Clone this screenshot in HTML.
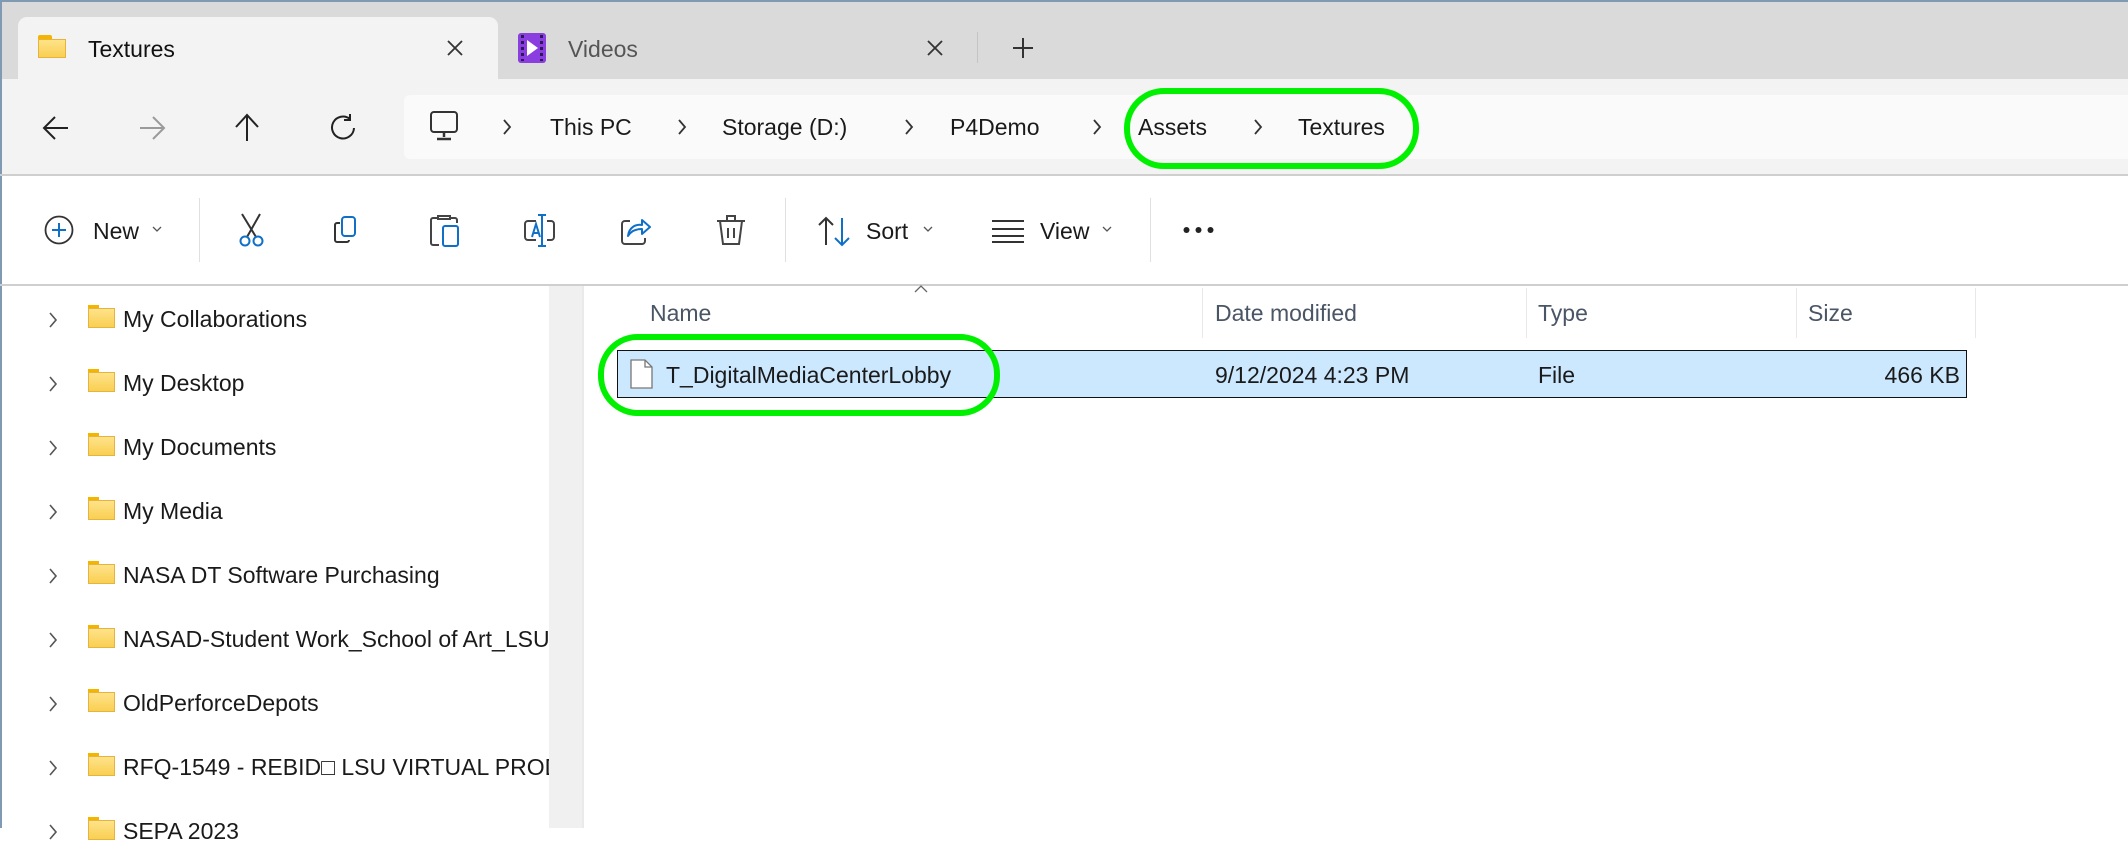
<!DOCTYPE html>
<html><head><meta charset="utf-8"><style>
*{margin:0;padding:0;box-sizing:border-box}
body{width:2128px;height:828px;overflow:hidden;background:#fff;font-family:"Liberation Sans",sans-serif;color:#1a1a1a;position:relative}
.a{position:absolute}
.t{position:absolute;font-size:23px;white-space:nowrap;line-height:1}
svg{position:absolute;overflow:visible}
</style></head><body>
<div class="a" style="left:0;top:0;width:2128px;height:79px;background:#dadada"></div>
<div class="a" style="left:0;top:0;width:2128px;height:2px;background:#7f9ab2"></div>
<div class="a" style="left:0;top:0;width:2px;height:828px;background:#7f9ab2"></div>
<div class="a" style="left:18px;top:17px;width:480px;height:64px;background:#f3f3f3;border-radius:9px 9px 0 0"></div>
<div class="a" style="left:38px;top:35px;width:14px;height:6px;background:#f4b400;border-radius:2px 2px 0 0"></div>
<div class="a" style="left:38px;top:39px;width:28px;height:19px;background:linear-gradient(#ffe38a,#f9cf52);border:1px solid #e6b43a"></div>
<div class="t" style="left:88px;top:38px;color:#111">Textures</div>
<svg style="left:447px;top:40px" width="16" height="16"><path d="M1 1L15 15M15 1L1 15" stroke="#333" stroke-width="1.8"/></svg>
<div class="a" style="left:518px;top:33px;width:28px;height:30px;background:#8a3ee0;border-radius:3px"></div>
<div class="a" style="left:521px;top:35px;width:3px;height:26px;background:repeating-linear-gradient(#2b1a55 0 3px,#8a3ee0 3px 6px)"></div>
<div class="a" style="left:540px;top:35px;width:3px;height:26px;background:repeating-linear-gradient(#2b1a55 0 3px,#8a3ee0 3px 6px)"></div>
<svg style="left:526px;top:40px" width="14" height="16"><path d="M1 0 L12 8 L1 16Z" fill="#fff"/></svg>
<div class="t" style="left:568px;top:38px;color:#555">Videos</div>
<svg style="left:927px;top:40px" width="16" height="16"><path d="M1 1L15 15M15 1L1 15" stroke="#333" stroke-width="1.8"/></svg>
<div class="a" style="left:977px;top:32px;width:1px;height:31px;background:#c4c4c4"></div>
<svg style="left:1013px;top:38px" width="20" height="20"><path d="M10 0V20M0 10H20" stroke="#333" stroke-width="2"/></svg>
<div class="a" style="left:2px;top:79px;width:2126px;height:95px;background:#f3f3f3"></div>
<div class="a" style="left:0;top:174px;width:2128px;height:2px;background:#cfcfcf"></div>
<svg style="left:43px;top:115px" width="26" height="26"><path d="M25 13H2M12 2L1 13L12 24" stroke="#222" stroke-width="2" fill="none"/></svg>
<svg style="left:139px;top:115px" width="26" height="26"><path d="M1 13H24M14 2L25 13L14 24" stroke="#9a9a9a" stroke-width="2" fill="none"/></svg>
<svg style="left:234px;top:114px" width="26" height="28"><path d="M13 27V2M2 13L13 1L24 13" stroke="#222" stroke-width="2" fill="none"/></svg>
<svg style="left:331px;top:114px" width="26" height="28"><path d="M19 5A11 11 0 1 0 23 14M19 0V6H13" stroke="#222" stroke-width="2" fill="none"/></svg>
<div class="a" style="left:404px;top:95px;width:1724px;height:64px;background:#fafafa;border-radius:6px 0 0 6px"></div>
<svg style="left:430px;top:111px" width="30" height="32"><rect x="1" y="1" width="26" height="20" rx="3" stroke="#333" stroke-width="2" fill="none"/><path d="M14 21V26M7 28H21" stroke="#333" stroke-width="2.5"/></svg>
<svg style="left:502px;top:119px" width="10" height="16"><path d="M2 1L8 8L2 15" stroke="#333" stroke-width="1.8" fill="none"/></svg>
<div class="t" style="left:550px;top:116px">This PC</div>
<svg style="left:677px;top:119px" width="10" height="16"><path d="M2 1L8 8L2 15" stroke="#333" stroke-width="1.8" fill="none"/></svg>
<div class="t" style="left:722px;top:116px">Storage (D:)</div>
<svg style="left:904px;top:119px" width="10" height="16"><path d="M2 1L8 8L2 15" stroke="#333" stroke-width="1.8" fill="none"/></svg>
<div class="t" style="left:950px;top:116px">P4Demo</div>
<svg style="left:1092px;top:119px" width="10" height="16"><path d="M2 1L8 8L2 15" stroke="#333" stroke-width="1.8" fill="none"/></svg>
<div class="t" style="left:1138px;top:116px">Assets</div>
<svg style="left:1253px;top:119px" width="10" height="16"><path d="M2 1L8 8L2 15" stroke="#333" stroke-width="1.8" fill="none"/></svg>
<div class="t" style="left:1298px;top:116px">Textures</div>
<div class="a" style="left:1124px;top:88px;width:295px;height:81px;border:6px solid #00f000;border-radius:40px"></div>
<svg style="left:44px;top:215px" width="30" height="30"><circle cx="15" cy="15" r="13.5" stroke="#333" stroke-width="1.8" fill="none"/><path d="M15 8V22M8 15H22" stroke="#1070c8" stroke-width="2"/></svg>
<div class="t" style="left:93px;top:220px">New</div>
<svg style="left:152px;top:226px" width="10" height="6"><path d="M1 1L5 5L9 1" stroke="#555" stroke-width="1.3" fill="none"/></svg>
<div class="a" style="left:199px;top:198px;width:1px;height:64px;background:#e0e0e0"></div>
<svg style="left:238px;top:213px" width="28" height="34"><path d="M4 1L18 24M22 1L9 24" stroke="#333" stroke-width="2"/><circle cx="7" cy="28" r="4.5" stroke="#1070c8" stroke-width="2" fill="none"/><circle cx="20" cy="28" r="4.5" stroke="#1070c8" stroke-width="2" fill="none"/></svg>
<svg style="left:333px;top:215px" width="30" height="30"><path d="M7 8H4A2 2 0 0 0 2 10V25A2 2 0 0 0 4 27H14A2 2 0 0 0 16 25" stroke="#333" stroke-width="2" fill="none"/><rect x="9" y="2" width="13" height="19" rx="3" stroke="#1070c8" stroke-width="2" fill="none"/></svg>
<svg style="left:429px;top:213px" width="32" height="34"><path d="M8 5H4A2 2 0 0 0 2 7V30A2 2 0 0 0 4 32H10M22 5H26A2 2 0 0 1 28 7V10M9 6V3H21V6Z" stroke="#444" stroke-width="2" fill="none"/><rect x="14" y="13" width="15" height="20" rx="2" stroke="#1070c8" stroke-width="2" fill="none"/></svg>
<svg style="left:523px;top:213px" width="38" height="34"><path d="M13 8H5A3 3 0 0 0 2 11V24A3 3 0 0 0 5 27H13M24 8H28A3 3 0 0 1 31 11V24A3 3 0 0 1 28 27H24" stroke="#444" stroke-width="2" fill="none"/><path d="M19 2V33M15 2H23M15 33H23M9 24L13 11L17 24M10.5 20H15.5" stroke="#1070c8" stroke-width="2" fill="none"/></svg>
<svg style="left:620px;top:213px" width="34" height="34"><path d="M10 8H5A3 3 0 0 0 2 11V28A3 3 0 0 0 5 31H22A3 3 0 0 0 25 28V25" stroke="#444" stroke-width="2" fill="none"/><path d="M8 23C9 14 16 11 22 12V7L30 14L22 21V16C16 16 11 18 8 23Z" stroke="#1070c8" stroke-width="2" fill="none" stroke-linejoin="round"/></svg>
<svg style="left:716px;top:213px" width="30" height="34"><path d="M1 8H29M11 8V3H19V8M4 8L7 31H23L26 8M12 15V25M18 15V25" stroke="#444" stroke-width="2" fill="none"/></svg>
<div class="a" style="left:785px;top:198px;width:1px;height:64px;background:#e0e0e0"></div>
<svg style="left:818px;top:216px" width="34" height="30"><path d="M8 29V2M1 9L8 2L15 9" stroke="#333" stroke-width="2" fill="none"/><path d="M24 2V29M17 22L24 29L31 22" stroke="#1070c8" stroke-width="2" fill="none"/></svg>
<div class="t" style="left:866px;top:220px">Sort</div>
<svg style="left:923px;top:226px" width="10" height="6"><path d="M1 1L5 5L9 1" stroke="#555" stroke-width="1.3" fill="none"/></svg>
<svg style="left:992px;top:219px" width="32" height="24"><path d="M0 2H32M0 10H32M0 17H32M0 23H32" stroke="#333" stroke-width="2"/></svg>
<div class="t" style="left:1040px;top:220px">View</div>
<svg style="left:1102px;top:226px" width="10" height="6"><path d="M1 1L5 5L9 1" stroke="#555" stroke-width="1.3" fill="none"/></svg>
<div class="a" style="left:1150px;top:198px;width:1px;height:64px;background:#e0e0e0"></div>
<svg style="left:1183px;top:226px" width="32" height="8"><circle cx="3.5" cy="4" r="3" fill="#222"/><circle cx="15.5" cy="4" r="3" fill="#222"/><circle cx="27.5" cy="4" r="3" fill="#222"/></svg>
<div class="a" style="left:0;top:284px;width:2128px;height:2px;background:#cfcfcf"></div>
<div class="a" style="left:549px;top:286px;width:33px;height:542px;background:#f0f0f0"></div>
<div class="a" style="left:582px;top:286px;width:2px;height:542px;background:#eaeaea"></div>
<div id="nav"></div>
<svg style="left:914px;top:285px" width="14" height="8"><path d="M1 7L7 1L13 7" stroke="#666" stroke-width="1.3" fill="none"/></svg>
<div class="t" style="left:650px;top:302px;color:#4a5565">Name</div>
<div class="a" style="left:1202px;top:288px;width:1px;height:50px;background:#e8e8e8"></div>
<div class="t" style="left:1215px;top:302px;color:#4a5565">Date modified</div>
<div class="a" style="left:1526px;top:288px;width:1px;height:50px;background:#e8e8e8"></div>
<div class="t" style="left:1538px;top:302px;color:#4a5565">Type</div>
<div class="a" style="left:1796px;top:288px;width:1px;height:50px;background:#e8e8e8"></div>
<div class="t" style="left:1808px;top:302px;color:#4a5565">Size</div>
<div class="a" style="left:1975px;top:288px;width:1px;height:50px;background:#e8e8e8"></div>
<div class="a" style="left:617px;top:350px;width:1350px;height:48px;background:#cce8ff;border:1.5px solid #111"></div>
<svg style="left:630px;top:359px" width="24" height="30"><path d="M1 1H15L22 8V29H1Z" fill="#fff" stroke="#777" stroke-width="1.3"/><path d="M15 1V8H22" fill="none" stroke="#777" stroke-width="1.3"/></svg>
<div class="t" style="left:666px;top:364px">T_DigitalMediaCenterLobby</div>
<div class="t" style="left:1215px;top:364px">9/12/2024 4:23 PM</div>
<div class="t" style="left:1538px;top:364px">File</div>
<div class="t" style="left:1960px;top:364px;transform:translateX(-100%)">466 KB</div>
<div class="a" style="left:598px;top:334px;width:402px;height:82px;border:6px solid #00f000;border-radius:40px"></div>
<script>
var n=["My Collaborations","My Desktop","My Documents","My Media","NASA DT Software Purchasing","NASAD-Student Work_School of Art_LSU","OldPerforceDepots","RFQ-1549 - REBID\u25A1 LSU VIRTUAL PRODUCTION","SEPA 2023"],h="";
n.forEach(function(s,i){var y=320+i*64;
h+='<svg style="left:48px;top:'+(y-8)+'px" width="10" height="16"><path d="M2 1L8 8L2 15" stroke="#555" stroke-width="1.6" fill="none"/></svg>';
h+='<div class="a" style="left:88px;top:'+(y-15)+'px;width:11px;height:5px;background:#f4b400"></div>';
h+='<div class="a" style="left:88px;top:'+(y-12)+'px;width:27px;height:20px;background:linear-gradient(#ffe38a,#f9cf52);border:1px solid #e6b43a"></div>';
h+='<div class="a" style="left:123px;top:'+(y-12)+'px;width:426px;height:30px;overflow:hidden"><div class="t" style="left:0;top:0">'+s+'</div></div>';});
document.getElementById("nav").innerHTML=h;
</script>
</body></html>
